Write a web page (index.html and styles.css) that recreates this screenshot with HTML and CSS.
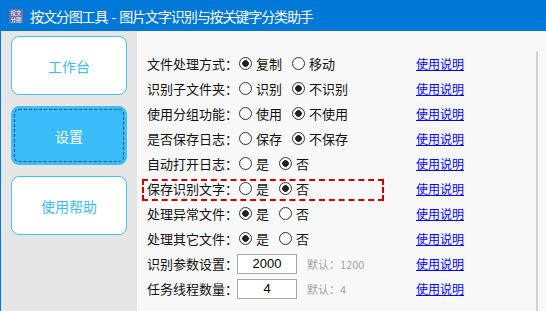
FILE: index.html
```html
<!DOCTYPE html>
<html lang="zh-CN">
<head>
  <meta charset="UTF-8">
  <meta name="viewport" content="width=device-width, initial-scale=1.0">
  <title>按文分图工具</title>
  <link rel="stylesheet" href="styles.css">
</head>
<body>

  <div class="title-bar">
    <svg class="app-icon" width="14" height="14" viewBox="0 0 14 14">
      <rect width="14" height="14" fill="#6b6aa8"/>
      <text x="7" y="6" font-size="5.5" fill="#fff" text-anchor="middle" font-family="Noto Sans CJK SC">按文</text>
      <text x="7" y="12.5" font-size="5.5" fill="#fff" text-anchor="middle" font-family="Noto Sans CJK SC">分图</text>
    </svg>
    <span class="title-text">按文分图工具 - 图片文字识别与按关键字分类助手</span>
  </div>

  <div class="main">
    <div class="sidebar">
      <div class="side-btn">工作台</div>
      <div class="side-btn active">设置</div>
      <div class="side-btn">使用帮助</div>
    </div>

    <div class="content">
      <div class="settings">
        <div class="row">
          <label class="name">文件处理方式：</label>
          <div class="options">
            <label class="opt"><input type="radio" name="r1" checked>复制</label>
            <label class="opt"><input type="radio" name="r1">移动</label>
          </div>
          <a href="#">使用说明</a>
        </div>
        <div class="row">
          <label class="name">识别子文件夹：</label>
          <div class="options">
            <label class="opt"><input type="radio" name="r2">识别</label>
            <label class="opt"><input type="radio" name="r2" checked>不识别</label>
          </div>
          <a href="#">使用说明</a>
        </div>
        <div class="row">
          <label class="name">使用分组功能：</label>
          <div class="options">
            <label class="opt"><input type="radio" name="r3">使用</label>
            <label class="opt"><input type="radio" name="r3" checked>不使用</label>
          </div>
          <a href="#">使用说明</a>
        </div>
        <div class="row">
          <label class="name">是否保存日志：</label>
          <div class="options">
            <label class="opt"><input type="radio" name="r4">保存</label>
            <label class="opt"><input type="radio" name="r4" checked>不保存</label>
          </div>
          <a href="#">使用说明</a>
        </div>
        <div class="row">
          <label class="name">自动打开日志：</label>
          <div class="options">
            <label class="opt"><input type="radio" name="r5">是</label>
            <label class="opt"><input type="radio" name="r5" checked>否</label>
          </div>
          <a href="#">使用说明</a>
        </div>
        <div class="row marked">
          <label class="name">保存识别文字：</label>
          <div class="options">
            <label class="opt"><input type="radio" name="r6">是</label>
            <label class="opt"><input type="radio" name="r6" checked>否</label>
          </div>
          <a href="#">使用说明</a>
        </div>
        <div class="row">
          <label class="name">处理异常文件：</label>
          <div class="options">
            <label class="opt"><input type="radio" name="r7" checked>是</label>
            <label class="opt"><input type="radio" name="r7">否</label>
          </div>
          <a href="#">使用说明</a>
        </div>
        <div class="row">
          <label class="name">处理其它文件：</label>
          <div class="options">
            <label class="opt"><input type="radio" name="r8" checked>是</label>
            <label class="opt"><input type="radio" name="r8">否</label>
          </div>
          <a href="#">使用说明</a>
        </div>
        <div class="row">
          <label class="name">识别参数设置：</label>
          <div class="options">
            <input type="text" class="num" value="2000">
            <span class="default">默认：1200</span>
          </div>
          <a href="#">使用说明</a>
        </div>
        <div class="row">
          <label class="name">任务线程数量：</label>
          <div class="options">
            <input type="text" class="num" value="4">
            <span class="default">默认：4</span>
          </div>
          <a href="#">使用说明</a>
        </div>
      </div>
    </div>
  </div>

</body>
</html>
```

FILE: styles.css
```css
body {
  margin: 0;
  height: 311px;
  overflow: hidden;
  font-family: "Noto Sans CJK SC", "Noto Sans", sans-serif;
  background-color: #f8f8f8;
}

.title-bar {
  height: 31px;
  background-color: #0078d7;
  color: #fff;
  display: flex;
  align-items: center;
  padding-left: 9px;
  font-size: 14px;
}

.title-text {
  letter-spacing: -1.1px;
  word-spacing: 2px;
}

.app-icon {
  margin-right: 7px;
  margin-top: 1px;
}

.main {
  display: flex;
  height: 280px;
  border-left: 1px solid #0078d7;
}

.sidebar {
  width: 126px;
  background-color: #e6e6e6;
  padding: 5px 0 0 10px;
  display: flex;
  flex-direction: column;
  gap: 11px;
}

.side-btn {
  width: 116px;
  height: 59px;
  box-sizing: border-box;
  border: 1px solid #42c0f8;
  border-radius: 8px;
  background-color: #fff;
  color: #3bbcf6;
  font-size: 14px;
  display: flex;
  align-items: center;
  justify-content: center;
}

.side-btn.active {
  background-color: #3bbdfb;
  color: #fff;
  outline: 1px dashed #1d4c6c;
  outline-offset: -4px;
}

.content {
  flex: 1;
  padding: 20px 0 0 10px;
}

.settings {
  width: 389px;
  height: 100%;
  border-right: 2px solid #d3d3d3;
}

.row {
  position: relative;
  height: 25px;
  display: grid;
  grid-template-columns: 92px 177px auto;
  align-items: center;
  font-size: 13px;
  color: #111;
}

.row.marked::after {
  content: "";
  position: absolute;
  left: -5px;
  top: 3px;
  width: 238px;
  height: 18px;
  border: 2px dashed #cc0000;
}

.options {
  display: flex;
  align-items: center;
}

.opt {
  display: inline-flex;
  align-items: center;
  gap: 4px;
  margin-right: 10px;
}

.opt input[type="radio"] {
  appearance: none;
  width: 13px;
  height: 13px;
  margin: 0;
  border: 1px solid #333;
  border-radius: 50%;
  background-color: #fff;
}

.opt input[type="radio"]:checked {
  background: radial-gradient(circle, #222 0 3px, #fff 3.6px);
}

.num {
  width: 60px;
  height: 20px;
  box-sizing: border-box;
  margin: 0 0 0 -2px;
  border: 1px solid #a8a8a8;
  background-color: #fff;
  text-align: center;
  font-family: "Liberation Sans", sans-serif;
  font-size: 13px;
  color: #000;
  padding: 0;
}

.default {
  margin-left: 10px;
  font-size: 11px;
  color: #a0a0a0;
}

.row a {
  font-size: 12px;
  color: #0000ff;
  text-decoration: underline;
}
```
